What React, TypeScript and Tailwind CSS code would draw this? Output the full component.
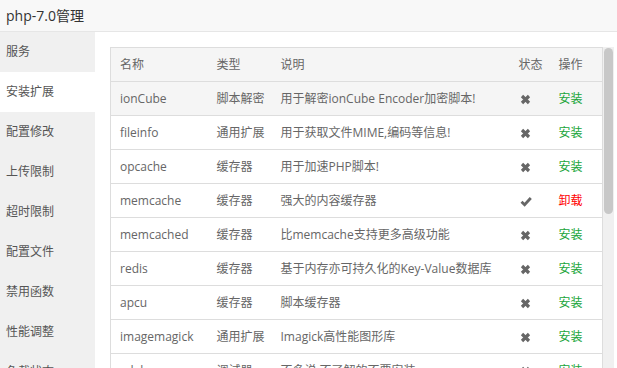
import { type ReactElement } from 'react';

interface Ext {
  name: string;
  type: string;
  desc: string;
  installed: boolean;
}

const menu = ['服务', '安装扩展', '配置修改', '上传限制', '超时限制', '配置文件', '禁用函数', '性能调整', '负载状态'];

const exts: Ext[] = [
  { name: 'ionCube', type: '脚本解密', desc: '用于解密ionCube Encoder加密脚本!', installed: false },
  { name: 'fileinfo', type: '通用扩展', desc: '用于获取文件MIME,编码等信息!', installed: false },
  { name: 'opcache', type: '缓存器', desc: '用于加速PHP脚本!', installed: false },
  { name: 'memcache', type: '缓存器', desc: '强大的内容缓存器', installed: true },
  { name: 'memcached', type: '缓存器', desc: '比memcache支持更多高级功能', installed: false },
  { name: 'redis', type: '缓存器', desc: '基于内存亦可持久化的Key-Value数据库', installed: false },
  { name: 'apcu', type: '缓存器', desc: '脚本缓存器', installed: false },
  { name: 'imagemagick', type: '通用扩展', desc: 'Imagick高性能图形库', installed: false },
  { name: 'xdebug', type: '调试器', desc: '不多说,不了解的不要安装', installed: false },
];

// status glyphs, drawn like the font-awesome times / check
function CrossIcon(): ReactElement {
  return (
    <svg width="11" height="11" viewBox="0 0 11 11" className="inline-block">
      <path d="M2 2 L9 9 M9 2 L2 9" stroke="#666" strokeWidth="3.2" strokeLinecap="butt" />
    </svg>
  );
}

function CheckIcon(): ReactElement {
  return (
    <svg width="12" height="11" viewBox="0 0 12 11" className="inline-block">
      <path d="M1.5 5.8 L4.6 8.8 L10.8 2" stroke="#666" strokeWidth="2.8" fill="none" strokeLinejoin="miter" />
    </svg>
  );
}

export default function App(): ReactElement {
  return (
    <div
      className="flex h-[368px] w-[617px] flex-col overflow-hidden bg-white text-[12px] text-[#666]"
      style={{ fontFamily: '"Open Sans", "Noto Sans CJK SC", sans-serif' }}
    >
      <div className="flex h-[32px] shrink-0 items-center border-b border-[#e6e6e6] bg-[#f8f8f8] pl-[6px] text-[14px] text-[#333]">
        php-7.0管理
      </div>
      <div className="flex min-h-0 flex-1">
        <div className="w-[95px] shrink-0 bg-[#f0f0f0]">
          {menu.map((m, i) => (
            <div
              key={m}
              className={`flex h-[40px] items-center pl-[6px] text-[#555] ${i === 1 ? 'bg-white' : ''}`}
            >
              {m}
            </div>
          ))}
        </div>
        <div className="flex flex-1 items-start pl-[15px] pt-[15px]">
          <table className="w-[492px] table-fixed border-collapse border border-[#ddd]">
            <colgroup>
              <col className="w-[97px]" />
              <col className="w-[64px]" />
              <col className="w-[238px]" />
              <col className="w-[40px]" />
              <col className="w-[53px]" />
            </colgroup>
            <thead>
              <tr className="h-[34px] bg-[#f5f5f5] text-left">
                <th className="pl-[9px] font-normal">名称</th>
                <th className="pl-[9px] font-normal">类型</th>
                <th className="pl-[9px] font-normal">说明</th>
                <th className="pl-[9px] font-normal">状态</th>
                <th className="pl-[9px] font-normal">操作</th>
              </tr>
            </thead>
            <tbody>
              {exts.map((e, i) => (
                <tr key={e.name} className={`h-[34px] border-t border-[#ddd] ${i === 0 ? 'bg-[#f5f5f5]' : ''}`}>
                  <td className="whitespace-nowrap pl-[9px]">{e.name}</td>
                  <td className="whitespace-nowrap pl-[9px]">{e.type}</td>
                  <td className="whitespace-nowrap pl-[9px]">{e.desc}</td>
                  <td className="pl-[10px]">{e.installed ? <CheckIcon /> : <CrossIcon />}</td>
                  <td className="pl-[9px]">
                    {e.installed ? (
                      <span className="text-[#ff0000]">卸载</span>
                    ) : (
                      <span className="text-[#20a53a]">安装</span>
                    )}
                  </td>
                </tr>
              ))}
            </tbody>
          </table>
          <div className="h-[400px] w-[11px] shrink-0 bg-[#f0f0f0] pt-[1px]">
            <div className="mx-auto h-[166px] w-[9px] rounded-[5px] bg-[#c8c8c8]" />
          </div>
        </div>
      </div>
    </div>
  );
}
